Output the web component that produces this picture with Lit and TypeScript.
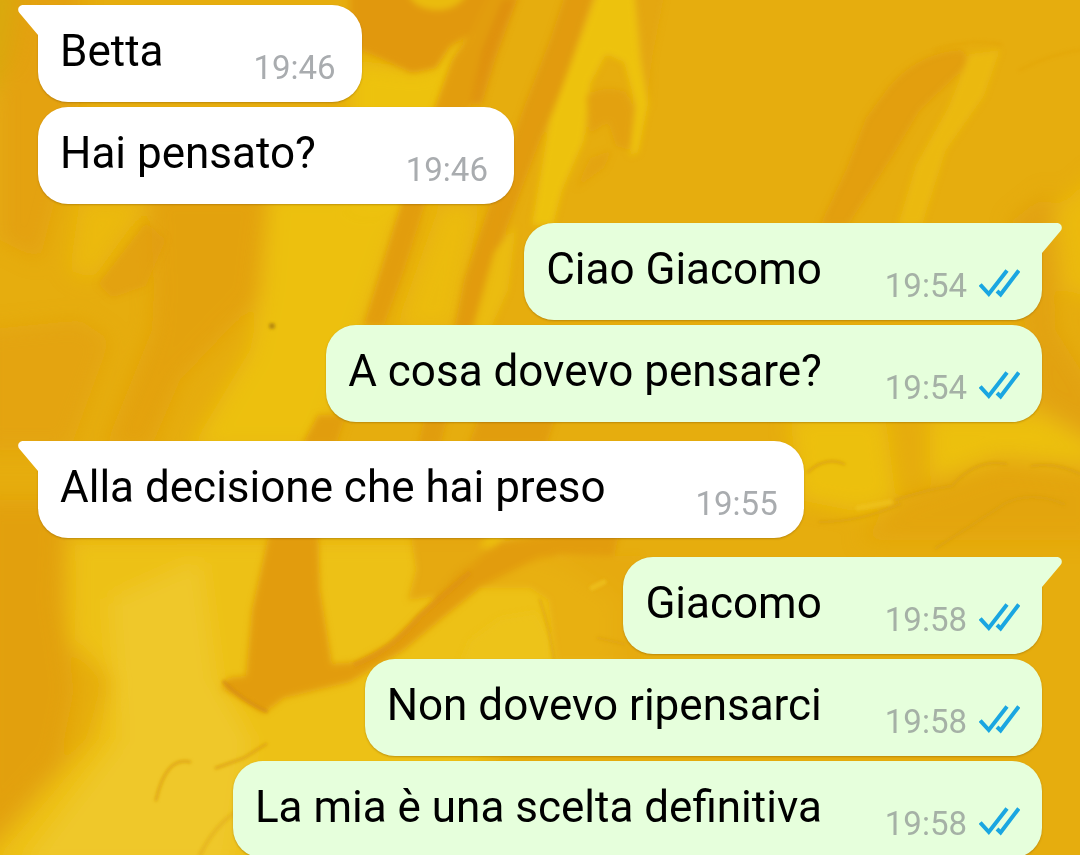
import { LitElement, html, css, svg, nothing } from "lit";
import { customElement, property } from "lit/decorators.js";

interface Message {
  text: string;
  time: string;
  sent?: boolean;
}

/** Consecutive messages of one sender; the first one carries the tail. */
const GROUPS: Message[][] = [
  [
    { text: "Betta", time: "19:46" },
    { text: "Hai pensato?", time: "19:46" },
  ],
  [
    { text: "Ciao Giacomo", time: "19:54", sent: true },
    { text: "A cosa dovevo pensare?", time: "19:54", sent: true },
  ],
  [{ text: "Alla decisione che hai preso", time: "19:55" }],
  [
    { text: "Giacomo", time: "19:58", sent: true },
    { text: "Non dovevo ripensarci", time: "19:58", sent: true },
    { text: "La mia è una scelta definitiva", time: "19:58", sent: true },
  ],
];

/** Painted canvas behind the conversation. */
@customElement("chat-wallpaper")
class ChatWallpaper extends LitElement {
  static styles = css`
    :host {
      display: block;
    }
    .paint {
      display: block;
      width: 100%;
      height: 100%;
    }
  `;

  render() {
    return html`
      <svg class="paint" viewBox="0 0 1080 855" preserveAspectRatio="xMidYMid slice" aria-hidden="true">
        <defs>
          <filter id="wide" x="-20%" y="-20%" width="140%" height="140%"><feGaussianBlur stdDeviation="10" /></filter>
          <filter id="soft" x="-20%" y="-20%" width="140%" height="140%"><feGaussianBlur stdDeviation="3" /></filter>
          <filter id="fine" x="-20%" y="-20%" width="140%" height="140%"><feGaussianBlur stdDeviation="1.5" /></filter>
        </defs>
        <rect width="1080" height="855" fill="#e6ad0e" />
        ${svg`
        <g filter="url(#wide)">
          <path fill="#d9a90d" d="M-20-20H30L16 60-20 110Z" />
          <path fill="#e29d0e" d="M18-20H80V100L40 260 0 240V100Z" opacity=".7" />
          <path fill="#e2a00d" d="M-20 330 80 320 110 340 70 450H-20Z" opacity=".7" />
          <path fill="#e3a20d" d="M150 190H268L256 300 180 380 150 450H104L152 330 154 290Z" />
          <path fill="#ebb90e" d="M80 200H150L92 280 70 270Z" />
          <path fill="#edc30e" d="M270 190H412L365 325 320 450H190L250 350 262 290Z" opacity=".85" />
          <path fill="#edc20f" d="M350 60 420 68 470 30 455 110 420 210H350Z" />
          <path fill="#ebbb0e" d="M440 204H480L456 330H395Z" />
          <path fill="#edc113" d="M70 538H480L560 560 620 600V660L340 870H-20L92 740 110 680 70 640Z" />
          <path fill="#efc829" d="M110 600 200 560 215 680 250 740 230 870H20L120 740Z" />
          <path fill="#e2a00d" d="M-20 500H64L60 600 74 690 60 760-20 850Z" />
          <path fill="#ecc00e" d="M790 415H885L896 500 860 512 800 500ZM930 415H1040L1100 450V465L1000 455 930 480Z" />
          <path fill="#e3a50d" d="M900 498 1000 464 1100 475V540H860Z" />
          <path fill="#e09b0c" d="M1010 222 1050 190 1056 330 1100 400V440L1035 400Z" opacity=".6" />
          <path fill="#ebba0d" d="M1056 210 1100 170V300L1065 290Z" />
        </g>
        <g filter="url(#soft)">
          <path fill="#e1980f" d="M350-10H520L478 30 450 46 436 68 412 73 380 58 350 45Z" />
          <path fill="#eabb0e" d="M408-8H468Q458 10 436 10 412 8 408-8Z" />
          <path fill="#e29d0f" d="M490-8 470 34 452 60 436 104 420 140 398 214 364 325H384L404 270 425 204 450 150 470 107 500 30 520-8Z" />
          <path fill="#dd8a0d" d="M502 0 482 50 470 104H482L496 58 518-2Z" opacity=".65" />
          <path fill="#e1980e" d="M566-8H594L562 90 540 140 516 204 494 260 476 330H454L464 280 490 204 524 107 550 40Z" opacity=".85" />
          <path fill="#edc20d" d="M598-8H634L640 60 648 104 638 152 630 156 636 106 624 62 606 54 590 84 584 140 562 190 553 225H532L550 120Z" />
          <path fill="#edc20d" d="M494 252 516 226 508 290 490 330H472Z" opacity=".7" />
          <path fill="#e19d0d" d="M586 96Q604 84 626 92L634 110 630 150 616 146 608 122 590 134Z" opacity=".75" />
          <path fill="#e2a00d" d="M590 158 612 150 604 168 576 188Z" opacity=".7" />
          <path fill="#e3a40d" d="M635-8H665L652 60 650 110 644 60Z" opacity=".6" />
          <path fill="#e29c0f" d="M888 88Q918 52 962 50 972 62 958 74L920 110 890 160 848 225H820L846 170 866 118Z" opacity=".85" />
          <path fill="#ecbd0d" d="M970 54 1000 50 984 96 946 150 922 225H898L916 165 948 108Z" opacity=".75" />
          <path fill="#e19b0e" d="M146 222 98 284 112 298 146 286 166 240Z" opacity=".6" />
          <path fill="#e19d0d" d="M318 415H346L336 445H302ZM425 415H448L440 446H418ZM480 415H556L546 446H468Z" />
          <path fill="#e29c10" d="M270 530H318L320 590 332 664 356 662 390 644 430 604 456 572 500 542 580 530 620 530 614 556 560 554 528 564 480 588 440 620 404 650 350 682 284 698 264 713 222 688 228 678 246 676 252 610Z" />
          <path fill="#e3a30f" d="M410 530H500L480 560 440 596 408 600 416 570Z" opacity=".8" />
          <path fill="#e5a90e" d="M476 588 540 556 640 556V662H556L548 600 530 588Z" opacity=".75" />
          <path fill="#edc31d" d="M470 640 500 618 536 612 550 640V664H460Z" opacity=".7" />
          <path fill="#edc10f" d="M488 534H506L496 546 478 548Z" opacity=".8" />
        </g>
        <g filter="url(#fine)" fill="none" stroke-linecap="round">
          <path stroke="#d58b0d" stroke-width="4" d="M224 682Q242 700 266 711" opacity=".7" />
          <path stroke="#dc8f0e" stroke-width="6" d="M356 664Q392 650 420 616L468 574" opacity=".55" />
          <path stroke="#dda00e" stroke-width="3" d="M156 800Q166 756 190 762M216 768 244 758 266 744" opacity=".8" />
          <path stroke="#dba00d" stroke-width="3" d="M808 472Q826 456 844 464M896 500Q924 490 952 486 976 458 1006 464M1032 466Q1056 462 1080 474M820 522Q860 522 900 504M936 548Q980 520 1004 504 1030 490 1064 504" opacity=".8" />
          <path stroke="#e1a00d" stroke-width="3" d="M935 50Q970 38 1000 44M1020 70Q1050 54 1080 50" opacity=".35" />
          <path stroke="#dda00e" stroke-width="3" d="M540 600Q550 630 554 660M598 638 624 644" opacity=".6" />
          <path stroke="#f0c51c" stroke-width="5" d="M592 588 604 582M858 508 890 502" opacity=".7" />
          <circle cx="272" cy="326" r="3" fill="#b5880c" />
          <path stroke="#e0a713" stroke-width="4" d="M200 855Q215 825 236 812" opacity=".5" />
        </g>`}
      </svg>
    `;
  }
}

@customElement("chat-message")
class ChatMessage extends LitElement {
  @property() text = "";
  @property() time = "";
  @property({ type: Boolean, reflect: true }) sent = false;
  @property({ type: Boolean, reflect: true }) tail = false;

  static styles = css`
    :host {
      display: flex;
      --fill: #ffffff;
      --ink: #a9acaf;
    }
    :host([sent]) {
      justify-content: flex-end;
      --fill: #e6ffdc;
      --ink: #a5b1a6;
    }
    .bubble {
      position: relative;
      display: flex;
      align-items: flex-end;
      gap: 90px;
      box-sizing: border-box;
      min-height: 97px;
      padding: 20px 26px 17px 22px;
      border-radius: 30px;
      background: var(--fill);
      box-shadow: 0 1px 2px rgba(110, 70, 0, 0.35);
    }
    :host([sent]) .bubble {
      gap: 63px;
      padding-right: 22px;
    }
    :host([tail]) .bubble {
      border-top-left-radius: 0;
    }
    :host([tail][sent]) .bubble {
      border-radius: 30px 0 30px 30px;
    }
    .tail {
      position: absolute;
      top: 0;
      right: 100%;
      width: 20px;
      height: 30px;
      fill: var(--fill);
    }
    :host([sent]) .tail {
      right: auto;
      left: 100%;
      transform: scaleX(-1);
    }
    .text {
      margin: 0;
      align-self: flex-start;
      font-size: 44px;
      line-height: 52px;
      color: #000;
    }
    .meta {
      display: flex;
      align-items: center;
      gap: 12px;
      font-size: 33px;
      line-height: 34px;
      color: var(--ink);
    }
    .ticks {
      width: 41px;
      height: 34px;
      fill: none;
      stroke: #1aa6e1;
      stroke-width: 4;
    }
  `;

  render() {
    return html`
      <div class="bubble">
        ${this.tail
          ? html`<svg class="tail" viewBox="0 0 20 30" aria-hidden="true">
              <path d="M20 0H5C1 0-1.500 4.500 1.500 8L20 30Z" />
            </svg>`
          : nothing}
        <p class="text">${this.text}</p>
        <div class="meta">
          <time>${this.time}</time>
          ${this.sent
            ? html`<svg class="ticks" viewBox="0 0 41 34" role="img" aria-label="Letto">
                <path d="M1.200 15.500 9.800 25 28 1.500M18 22 21.600 25.500 39.800 1.500" />
              </svg>`
            : nothing}
        </div>
      </div>
    `;
  }
}

@customElement("app-root")
class AppRoot extends LitElement {
  static styles = css`
    :host {
      display: block;
      position: relative;
      height: 100vh;
      overflow: hidden;
      background: #e6ad0e;
      font-family: Roboto, "Noto Sans", sans-serif;
    }
    .wallpaper {
      position: absolute;
      inset: 0;
    }
    .thread {
      position: relative;
      display: flex;
      flex-direction: column;
      gap: 19px;
      padding: 5px 38px;
    }
    .group {
      display: flex;
      flex-direction: column;
      gap: 5px;
    }
  `;

  render() {
    return html`
      <chat-wallpaper class="wallpaper"></chat-wallpaper>
      <main class="thread">
        ${GROUPS.map(
          (group) => html`<section class="group">
            ${group.map(
              (m, i) => html`<chat-message
                .text=${m.text}
                .time=${m.time}
                ?sent=${!!m.sent}
                ?tail=${i === 0}
              ></chat-message>`
            )}
          </section>`
        )}
      </main>
    `;
  }
}
